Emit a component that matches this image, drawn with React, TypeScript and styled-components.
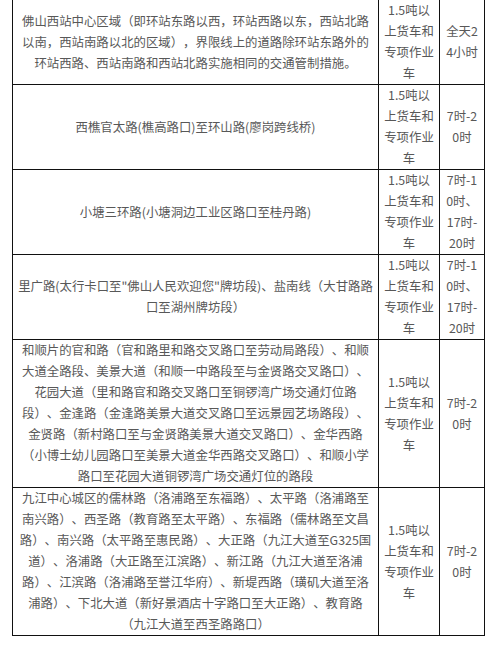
import React from "react";
import styled, { createGlobalStyle } from "styled-components";

const Global = createGlobalStyle`
  html, body {
    margin: 0;
    padding: 0;
    background: #ffffff;
  }
`;

const Page = styled.div`
  padding: 0 0 0 12px;
  font-family: "Noto Sans CJK SC", "Noto Sans", sans-serif;
  font-size: 12.4px;
  line-height: 21px;
  color: #585858;
  text-spacing-trim: space-all;
`;

const Table = styled.div`
  width: 473px;
  display: flex;
  flex-direction: column;
`;

const Row = styled.div`
  display: grid;
  grid-template-columns: 366px 61px 46px;
  border-bottom: 1px solid #111;
`;

const Cell = styled.div<{ $pad: number; $narrow?: boolean; $last?: boolean }>`
  box-sizing: border-box;
  display: flex;
  align-items: center;
  justify-content: center;
  text-align: center;
  padding: 0 ${(p) => p.$pad}px;
  border-left: 1px solid #111;
  border-right: ${(p) => (p.$last ? "1px solid #111" : "none")};
  line-break: ${(p) => (p.$narrow ? "anywhere" : "auto")};
  word-break: ${(p) => (p.$narrow ? "break-all" : "normal")};
`;

const CellText = styled.div`
  width: 100%;
`;

type Entry = { area: string; vehicles: string; time: string };

const VEH = "1.5吨以上货车和专项作业车";

const rows: Entry[] = [
  {
    area:
      "佛山西站中心区域（即环站东路以西，环站西路以东，西站北路以南，西站南路以北的区域），界限线上的道路除环站东路外的环站西路、西站南路和西站北路实施相同的交通管制措施。",
    vehicles: VEH,
    time: "全天24小时",
  },
  {
    area: "西樵官太路(樵高路口)至环山路(廖岗跨线桥)",
    vehicles: VEH,
    time: "7时-20时",
  },
  {
    area: "小塘三环路(小塘洞边工业区路口至桂丹路)",
    vehicles: VEH,
    time: "7时-10时、17时-20时",
  },
  {
    area: "里广路(太行卡口至\"佛山人民欢迎您\"牌坊段)、盐南线（大甘路路口至湖州牌坊段）",
    vehicles: VEH,
    time: "7时-10时、17时-20时",
  },
  {
    area:
      "和顺片的官和路（官和路里和路交叉路口至劳动局路段）、和顺大道全路段、美景大道（和顺一中路段至与金贤路交叉路口）、花园大道（里和路官和路交叉路口至铜锣湾广场交通灯位路段）、金逢路（金逢路美景大道交叉路口至远景园艺场路段）、金贤路（新村路口至与金贤路美景大道交叉路口）、金华西路（小博士幼儿园路口至美景大道金华西路交叉路口）、和顺小学路口至花园大道铜锣湾广场交通灯位的路段",
    vehicles: VEH,
    time: "7时-20时",
  },
  {
    area:
      "九江中心城区的儒林路（洛浦路至东福路）、太平路（洛浦路至南兴路）、西圣路（教育路至太平路）、东福路（儒林路至文昌路）、南兴路（太平路至惠民路）、大正路（九江大道至G325国道）、洛浦路（大正路至江滨路）、新江路（九江大道至洛浦路）、江滨路（洛浦路至誉江华府）、新堤西路（璜矶大道至洛浦路）、下北大道（新好景酒店十字路口至大正路）、教育路（九江大道至西圣路路口）",
    vehicles: VEH,
    time: "7时-20时",
  },
];

export default function App() {
  return (
    <>
      <Global />
      <Page>
        <Table>
          {rows.map((r, i) => (
            <Row key={i}>
              <Cell $pad={4.5}>
                <CellText>{r.area}</CellText>
              </Cell>
              <Cell $pad={4} $narrow>
                <CellText>{r.vehicles}</CellText>
              </Cell>
              <Cell $pad={4} $narrow $last>
                <CellText>{r.time}</CellText>
              </Cell>
            </Row>
          ))}
        </Table>
      </Page>
    </>
  );
}
